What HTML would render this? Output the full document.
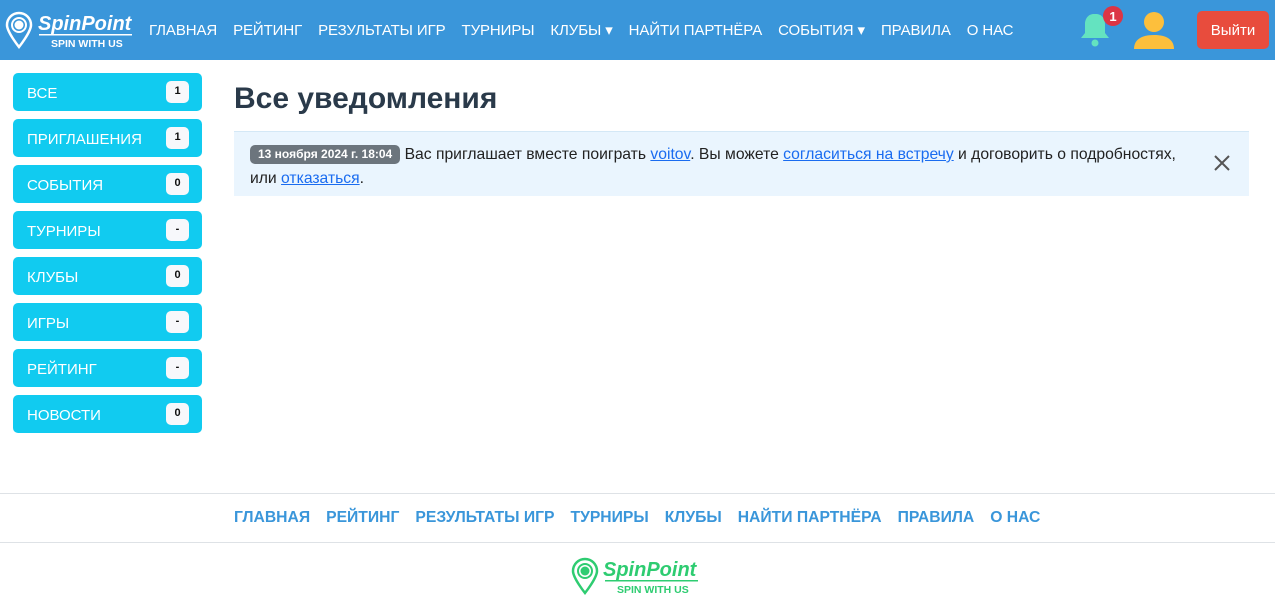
<!DOCTYPE html>
<html><head><meta charset="utf-8"><style>
*{box-sizing:border-box;margin:0;padding:0}
body{width:1275px;height:602px;overflow:hidden;background:#fff;font-family:"Liberation Sans",sans-serif;position:relative}
.hdr{position:absolute;left:0;top:0;width:1275px;height:60px;background:#3a96da}
.nav{position:absolute;top:21px;left:149px;color:#fff;font-size:15px;white-space:nowrap;letter-spacing:-0.1px}
.nav span{margin-right:16px}
.logo{position:absolute}
.side a{position:absolute;left:13px;width:189px;height:38px;background:#11cbf0;border-radius:5px;color:#fff;font-size:15px;padding:12px 0 0 14px;text-decoration:none}
.side b{position:absolute;right:13px;top:8px;width:23px;height:22px;background:#f7f8fb;border-radius:5px;color:#111;font-size:11px;text-align:center;line-height:20px}
h1{position:absolute;left:234px;top:82px;font-size:30px;color:#2a3a4a;font-weight:bold}
.alert{position:absolute;left:234px;top:131px;width:1015px;height:65px;background:#eaf5fe;border-top:1px solid #d4e8f6;padding:11px 16px;font-size:15.7px;color:#222;line-height:24px}
.badge{display:inline-block;background:#6c757d;color:#fff;font-size:12px;font-weight:bold;border-radius:5px;padding:0 8px;line-height:19px;vertical-align:1px}
.alert a{color:#1a6cf0;text-decoration:underline}
.x{position:absolute;right:18px;top:22px}
.fl{position:absolute;left:0;width:1275px;height:1px;background:#dee2e6}
.foot{position:absolute;top:509px;left:234px;font-size:15.7px;font-weight:bold;color:#3a96da;white-space:nowrap}
.foot span{margin-right:16px}
.out{position:absolute;left:1197px;top:11px;width:72px;height:38px;background:#e84c3d;border-radius:5px;color:#fff;font-size:15px;text-align:center;padding-top:11px}
</style></head><body>
<div class="hdr">
<svg class="logo" style="left:4px;top:10px" width="130" height="40" viewBox="0 0 130 40">
<path d="M15 3a12 12 0 0 0-12 12c0 7 12 22 12 22s12-15 12-22A12 12 0 0 0 15 3z" fill="none" stroke="#fff" stroke-width="2.5"/>
<circle cx="15" cy="15" r="7" fill="none" stroke="#fff" stroke-width="2"/><circle cx="15" cy="15" r="4.5" fill="#fff"/>
<text x="34" y="20" font-family="Liberation Sans" font-weight="bold" font-style="italic" font-size="20" fill="#fff">SpinPoint</text>
<rect x="35" y="24" width="93" height="1.5" fill="#fff"/>
<text x="47" y="37" font-family="Liberation Sans" font-weight="bold" font-size="10.5" fill="#fff">SPIN WITH US</text>
</svg>
<div class="nav"><span>ГЛАВНАЯ</span><span>РЕЙТИНГ</span><span>РЕЗУЛЬТАТЫ ИГР</span><span>ТУРНИРЫ</span><span>КЛУБЫ ▾</span><span>НАЙТИ ПАРТНЁРА</span><span>СОБЫТИЯ ▾</span><span>ПРАВИЛА</span><span>О НАС</span></div>
<svg style="position:absolute;left:1076px;top:5px" width="50" height="44" viewBox="0 0 50 44">
<path d="M18 9c-6 0-9 5-9 10v9l-4 5h28l-4-5v-9c0-5-3-10-9-10z" fill="#64e3c0"/><circle cx="19" cy="38" r="3.5" fill="#64e3c0"/>
<circle cx="37" cy="11" r="10" fill="#dc3545"/><text x="37" y="16" text-anchor="middle" font-family="Liberation Sans" font-weight="bold" font-size="13" fill="#fff">1</text>
</svg>
<svg style="position:absolute;left:1133px;top:10px" width="42" height="40" viewBox="0 0 42 40">
<circle cx="21" cy="12" r="10" fill="#fdbf3c"/><path d="M1 39c0-9 7-14 20-14s20 5 20 14z" fill="#fdbf3c"/>
</svg>
<div class="out">Выйти</div>
</div>
<div class="side">
<a style="top:73px">ВСЕ<b>1</b></a>
<a style="top:119px">ПРИГЛАШЕНИЯ<b>1</b></a>
<a style="top:165px">СОБЫТИЯ<b>0</b></a>
<a style="top:211px">ТУРНИРЫ<b>-</b></a>
<a style="top:257px">КЛУБЫ<b>0</b></a>
<a style="top:303px">ИГРЫ<b>-</b></a>
<a style="top:349px">РЕЙТИНГ<b>-</b></a>
<a style="top:395px">НОВОСТИ<b>0</b></a>
</div>
<h1>Все уведомления</h1>
<div class="alert"><span class="badge">13 ноября 2024 г. 18:04</span> Вас приглашает вместе поиграть <a>voitov</a>. Вы можете <a>согласиться на встречу</a> и договорить о подробностях,<br>или <a>отказаться</a>.
<svg class="x" width="18" height="18" viewBox="0 0 18 18"><path d="M2 2L16 16M16 2L2 16" stroke="#555" stroke-width="2"/></svg></div>
<div class="fl" style="top:493px"></div>
<div class="foot"><span>ГЛАВНАЯ</span><span>РЕЙТИНГ</span><span>РЕЗУЛЬТАТЫ ИГР</span><span>ТУРНИРЫ</span><span>КЛУБЫ</span><span>НАЙТИ ПАРТНЁРА</span><span>ПРАВИЛА</span><span>О НАС</span></div>
<div class="fl" style="top:542px"></div>
<svg style="position:absolute;left:569px;top:556px" width="132" height="42" viewBox="0 0 132 42">
<path d="M16 3a12 12 0 0 0-12 12c0 7 12 22 12 22s12-15 12-22A12 12 0 0 0 16 3z" fill="none" stroke="#2ecc71" stroke-width="2.5"/>
<circle cx="16" cy="15" r="7" fill="none" stroke="#2ecc71" stroke-width="2"/><circle cx="16" cy="15" r="4.5" fill="#2ecc71"/>
<text x="34" y="20" font-family="Liberation Sans" font-weight="bold" font-style="italic" font-size="20" fill="#2ecc71">SpinPoint</text>
<rect x="36" y="24" width="93" height="1.5" fill="#2ecc71"/>
<text x="48" y="37" font-family="Liberation Sans" font-weight="bold" font-size="10.5" fill="#2ecc71">SPIN WITH US</text>
</svg>
</body></html>
